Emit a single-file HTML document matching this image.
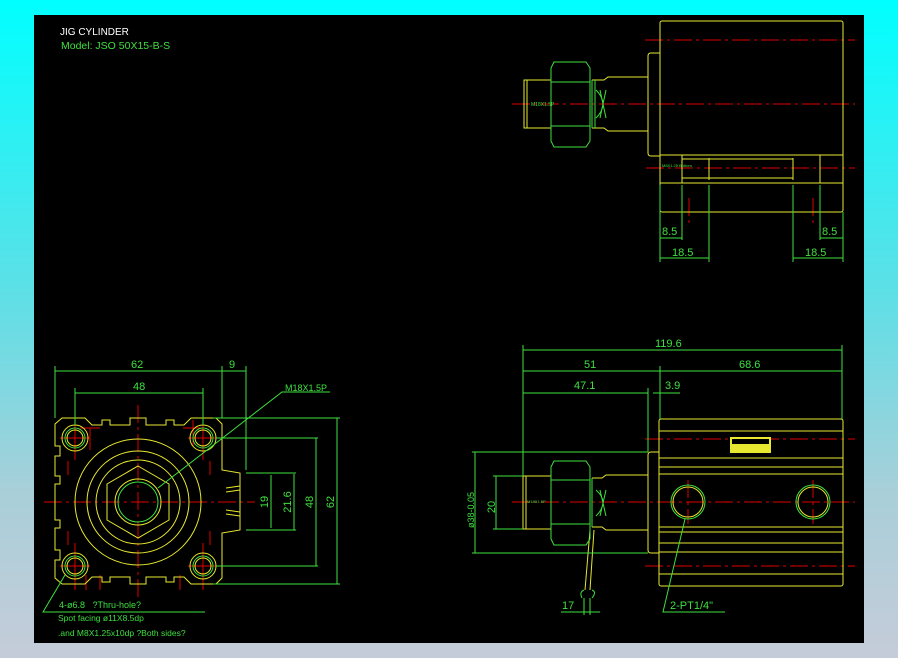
<!DOCTYPE html>
<html><head><meta charset="utf-8"><style>
html,body{margin:0;padding:0;width:898px;height:658px;overflow:hidden;background:linear-gradient(180deg,#00ffff 0%,#5fdfe6 45%,#a9cfd9 75%,#c5ccd9 100%);}
svg{position:absolute;left:0;top:0}
text{font-family:"Liberation Sans",sans-serif}
</style></head><body>
<svg width="898" height="658" viewBox="0 0 898 658">
<rect x="34" y="15" width="830" height="628" fill="#000"/>
<text x="60" y="35" fill="#fff" font-size="10">JIG CYLINDER</text>
<text x="61" y="49" fill="#3ee03e" font-size="10.5">Model:  JSO 50X15-B-S</text>

<!-- TOP RIGHT VIEW -->
<g fill="none" stroke-width="1">
<g stroke="#d00" stroke-dasharray="18,4,3,4">
<line x1="645" y1="40" x2="855" y2="40"/>
<line x1="512" y1="104" x2="855" y2="104"/>
<line x1="646" y1="168" x2="855" y2="168"/>
<line x1="689" y1="198" x2="689" y2="225"/>
<line x1="813" y1="198" x2="813" y2="225"/>
</g>
<g stroke="#e8e830">
<rect x="660" y="21" width="183" height="191" rx="2"/>
<path d="M660 53 H651 Q648 53 648 56 V153 Q648 156 651 156 H660"/>
<path d="M648 77 H608 L604 80 H592 M648 131 H608 L604 128 H592"/>
<rect x="524" y="80" width="27" height="48"/>
<line x1="527" y1="80" x2="527" y2="128"/>
<line x1="660" y1="155" x2="843" y2="155"/>
<line x1="682" y1="159" x2="793" y2="159"/>
<line x1="682" y1="178" x2="793" y2="178"/>
<line x1="660" y1="183" x2="843" y2="183"/>
<line x1="682" y1="155" x2="682" y2="183"/>
<line x1="709" y1="158" x2="709" y2="180"/>
<line x1="793" y1="158" x2="793" y2="180"/>
<line x1="820" y1="155" x2="820" y2="183"/>
</g>
<g stroke="#3ee03e">
<path d="M554 62 H586 L590 68 V141 L586 147 H554 L551 141 V68 Z"/>
<line x1="551" y1="82" x2="590" y2="82"/><line x1="551" y1="126" x2="590" y2="126"/>
<line x1="592" y1="80" x2="592" y2="128"/><line x1="595" y1="80" x2="595" y2="128"/>
<path d="M596 90 Q610 104 596 118 M600 90 L606 118 M606 90 L600 118"/>
<line x1="660" y1="185" x2="660" y2="262"/><line x1="682" y1="185" x2="682" y2="240"/>
<line x1="709" y1="185" x2="709" y2="262"/><line x1="843" y1="212" x2="843" y2="262"/>
<line x1="820" y1="185" x2="820" y2="240"/><line x1="793" y1="185" x2="793" y2="262"/>
<line x1="660" y1="238" x2="682" y2="238"/><line x1="820" y1="238" x2="843" y2="238"/>
<line x1="660" y1="258" x2="709" y2="258"/><line x1="793" y1="258" x2="843" y2="258"/>
</g>
</g>
<g fill="#3ee03e" font-size="11">
<text x="662" y="235">8.5</text><text x="822" y="235">8.5</text>
<text x="672" y="256">18.5</text><text x="805" y="256">18.5</text>
<text x="531" y="106" font-size="5">M18X1.5P</text>
<text x="662" y="167" font-size="4">M8X1.25 Bottom</text>
</g>

<!-- BOTTOM RIGHT VIEW -->
<g fill="none">
<g stroke="#d00" stroke-dasharray="18,4,3,4">
<line x1="645" y1="439" x2="855" y2="439"/>
<line x1="512" y1="502" x2="855" y2="502"/>
<line x1="645" y1="566" x2="855" y2="566"/>
<line x1="688" y1="480" x2="688" y2="524"/>
<line x1="813" y1="480" x2="813" y2="524"/>
</g>
<g stroke="#e8e830">
<rect x="659" y="419" width="184" height="167" rx="2"/>
<path d="M659 431H843M659 458H843M659 467H843M659 474H843M659 527H843M659 532H843M659 543H843M659 552H843M659 574H843"/>
<path d="M659 452 H651 Q648 452 648 455 V550 Q648 553 651 553 H659"/>
<path d="M648 475 H606 L602 478 H592 M648 530 H606 L602 527 H592"/>
<rect x="523" y="476" width="28" height="53"/>
<line x1="526" y1="476" x2="526" y2="529"/>
<path d="M590 530 L585 590 M594 530 L590 590"/>
</g>
<rect x="730" y="437" width="41" height="16" fill="#e8e830"/>
<rect x="732" y="439" width="37" height="5" fill="#000"/>
<g stroke="#3ee03e">
<path d="M554 461 H586 L590 467 V539 L586 545 H554 L551 539 V467 Z"/>
<line x1="551" y1="480" x2="590" y2="480"/><line x1="551" y1="524" x2="590" y2="524"/>
<line x1="592" y1="478" x2="592" y2="527"/>
<path d="M596 490 Q610 502 596 516 M600 490 L606 516 M606 490 L600 516"/>
<circle cx="688" cy="502" r="17"/><circle cx="813" cy="502" r="17"/>
<circle cx="688" cy="502" r="15" stroke="#e8e830"/><circle cx="813" cy="502" r="15" stroke="#e8e830"/>
<line x1="523" y1="350" x2="842" y2="350"/><line x1="523" y1="371" x2="842" y2="371"/>
<line x1="523" y1="393" x2="648" y2="393"/><line x1="653" y1="393" x2="680" y2="393"/>
<line x1="523" y1="345" x2="523" y2="476"/><line x1="842" y1="345" x2="842" y2="419"/>
<line x1="660" y1="366" x2="660" y2="419"/><line x1="648" y1="388" x2="648" y2="452"/>
<line x1="472" y1="452" x2="648" y2="452"/><line x1="472" y1="553" x2="648" y2="553"/>
<line x1="475" y1="452" x2="475" y2="553"/>
<line x1="493" y1="476" x2="523" y2="476"/><line x1="493" y1="529" x2="523" y2="529"/>
<line x1="496" y1="476" x2="496" y2="529"/>
<path d="M685 519 L663 612 H725"/>
<path d="M561 612 H600 M584 598 V615 M590 598 V615"/>
<path d="M584 590 Q579 592 582 598 M592 590 Q597 592 592 598"/>
</g>
</g>
<g fill="#3ee03e" font-size="11">
<text x="655" y="347">119.6</text><text x="584" y="368">51</text><text x="739" y="368">68.6</text>
<text x="574" y="389">47.1</text><text x="665" y="389">3.9</text>
<text x="495" y="507" transform="rotate(-90 495 507)" text-anchor="middle">20</text>
<text x="474" y="510" transform="rotate(-90 474 510)" text-anchor="middle" font-size="9">ø38-0.05</text>
<text x="562" y="609">17</text>
<text x="670" y="609">2-PT1/4"</text>
<text x="527" y="503" font-size="4">M18X1.5P</text>
</g>

<!-- BOTTOM LEFT VIEW -->
<g fill="none">
<g stroke="#d00">
<line x1="44" y1="502" x2="255" y2="502" stroke-dasharray="18,4,3,4"/>
<line x1="138" y1="405" x2="138" y2="600" stroke-dasharray="18,4,3,4"/>
<path d="M60 438H90M75 413V460M188 438H218M203 413V460M60 566H90M75 543V590M188 566H218M203 543V590"/>
<path d="M90 428V450M80 428H100M183 428H203M193 420V446M68 461V475M68 531V545M210 461V475M210 531V545M86 575V590M180 575V590M100 575V590"/>
</g>
<g stroke="#e8e830">
<path d="M62 418 H85 L92 425 H102 V420 H110 V425 H130 V418 H146 V425 H166 V420 H174 V425 H184 L191 418 H216 L222 424 V470 L240 473 V530 L222 533 V578 L216 584 H191 L184 577 H174 V582 H166 V577 H146 V584 H130 V577 H110 V582 H102 V577 H92 L85 584 H62 L55 578 V560 H60 V550 H55 V528 H60 V520 H55 V484 H60 V476 H55 V456 H60 V446 H55 V424 Z"/>
<circle cx="138" cy="502" r="63"/><circle cx="138" cy="502" r="51"/><circle cx="138" cy="502" r="42"/>
<path d="M138 466 L169 484 V520 L138 538 L107 520 V484 Z"/>
<circle cx="138" cy="502" r="23"/>
<circle cx="75" cy="438" r="13"/><circle cx="203" cy="438" r="13"/><circle cx="75" cy="566" r="13"/><circle cx="203" cy="566" r="13"/>
<circle cx="75" cy="438" r="8"/><circle cx="203" cy="438" r="8"/><circle cx="75" cy="566" r="8"/><circle cx="203" cy="566" r="8"/>
<path d="M226 488 L240 486 M226 492 L240 490 M226 510 L240 512 M226 514 L240 516"/>
</g>
<g stroke="#3ee03e">
<circle cx="138" cy="502" r="20"/>
<circle cx="75" cy="438" r="10"/><circle cx="203" cy="438" r="10"/><circle cx="75" cy="566" r="10"/><circle cx="203" cy="566" r="10"/>
<line x1="55" y1="371" x2="246" y2="371"/><line x1="75" y1="393" x2="203" y2="393"/>
<line x1="55" y1="366" x2="55" y2="418"/><line x1="222" y1="366" x2="222" y2="418"/><line x1="246" y1="366" x2="246" y2="470"/>
<line x1="75" y1="388" x2="75" y2="425"/><line x1="203" y1="388" x2="203" y2="425"/>
<line x1="213" y1="418" x2="340" y2="418"/><line x1="213" y1="584" x2="340" y2="584"/>
<line x1="216" y1="438" x2="318" y2="438"/><line x1="216" y1="566" x2="318" y2="566"/>
<line x1="246" y1="473" x2="296" y2="473"/><line x1="246" y1="530" x2="296" y2="530"/>
<line x1="337" y1="418" x2="337" y2="584"/><line x1="316" y1="438" x2="316" y2="566"/>
<line x1="294" y1="474" x2="294" y2="530"/><line x1="271" y1="475" x2="271" y2="528"/>
<path d="M158 488 L282 392 H330"/>
<path d="M65 575 L43 612 H205"/>
</g>
</g>
<g fill="#3ee03e" font-size="11">
<text x="131" y="368">62</text><text x="229" y="368">9</text><text x="133" y="390">48</text>
<text x="285" y="391" font-size="9">M18X1.5P</text>
<text x="268" y="502" transform="rotate(-90 268 502)" text-anchor="middle">19</text>
<text x="291" y="502" transform="rotate(-90 291 502)" text-anchor="middle">21.6</text>
<text x="313" y="502" transform="rotate(-90 313 502)" text-anchor="middle">48</text>
<text x="334" y="502" transform="rotate(-90 334 502)" text-anchor="middle">62</text>
<text x="59" y="608" font-size="9">4-ø6.8 &#160;&#160;?Thru-hole?</text>
<text x="58" y="621" font-size="8.5">Spot facing  ø11X8.5dp</text>
<text x="58" y="636" font-size="8.5">.and M8X1.25x10dp ?Both sides?</text>
</g>
</svg>
</body></html>
